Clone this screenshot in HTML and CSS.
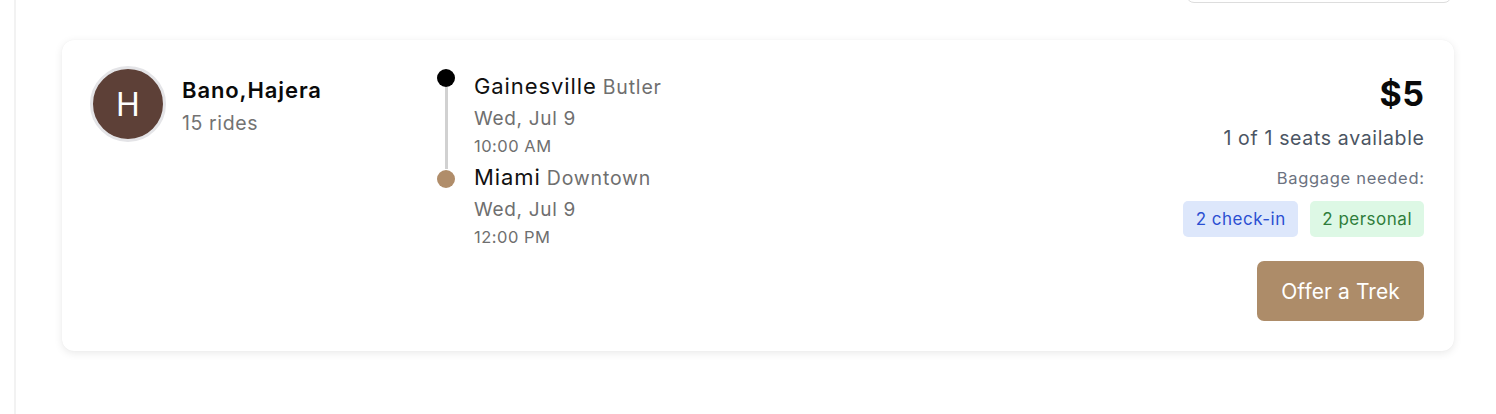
FILE: index.html
```html
<!DOCTYPE html>
<html lang="en">
<head>
<meta charset="utf-8">
<title>Ride request</title>
<link rel="stylesheet" href="styles.css">
</head>
<body>
<div class="layout">
  <aside class="rail"></aside>
  <main class="main">
    <div class="toolbar">
      <div class="select-box"></div>
    </div>
    <section class="card">
      <div class="rider">
        <div class="avatar">H</div>
        <div class="rider-info">
          <div class="rider-name">Bano,Hajera</div>
          <div class="rider-rides">15 rides</div>
        </div>
      </div>
      <div class="route">
        <div class="stop stop-first">
          <div class="marker">
            <span class="dot dot-start"></span>
            <span class="line"></span>
          </div>
          <div class="stop-info">
            <div class="place"><span class="city">Gainesville</span> <span class="area">Butler</span></div>
            <div class="date">Wed, Jul 9</div>
            <div class="time">10:00 AM</div>
          </div>
        </div>
        <div class="stop stop-last">
          <div class="marker">
            <span class="dot dot-end"></span>
          </div>
          <div class="stop-info">
            <div class="place"><span class="city">Miami</span> <span class="area">Downtown</span></div>
            <div class="date">Wed, Jul 9</div>
            <div class="time">12:00 PM</div>
          </div>
        </div>
      </div>
      <div class="offer">
        <div class="price">$5</div>
        <div class="seats">1 of 1 seats available</div>
        <div class="baggage-label">Baggage needed:</div>
        <div class="badges">
          <span class="badge badge-blue">2 check-in</span>
          <span class="badge badge-green">2 personal</span>
        </div>
        <button class="btn-offer">Offer a Trek</button>
      </div>
    </section>
  </main>
</div>
</body>
</html>
```

FILE: styles.css
```css
* { box-sizing: border-box; }
html, body { margin: 0; padding: 0; background: #ffffff; }
body {
  font-family: Inter, "Noto Sans", "Liberation Sans", sans-serif;
  color: #111111;
  height: 414px;
  overflow: hidden;
}
.layout { display: flex; min-height: 414px; }
.rail {
  width: 16px;
  flex: 0 0 16px;
  border-right: 2px solid #f2f2f2;
}
.main {
  flex: 1;
  padding: 0 42px 0 46px;
}
.toolbar {
  display: flex;
  justify-content: flex-end;
  margin-top: -37px;
  padding-right: 2px;
}
.select-box {
  width: 266px;
  height: 40px;
  border: 1px solid #dddddd;
  border-radius: 8px;
  background: #fff;
}
.card {
  margin-top: 37px;
  display: flex;
  align-items: flex-start;
  background: #fff;
  border-radius: 12px;
  box-shadow: 0 2px 8px rgba(0, 0, 0, 0.09), 0 0 1px rgba(0, 0, 0, 0.06);
  padding: 26px 30px 30px 28px;
  height: 311px;
}
.rider {
  display: flex;
  align-items: flex-start;
  gap: 16px;
  width: 347px;
  flex: 0 0 347px;
}
.avatar {
  width: 76px;
  height: 76px;
  border-radius: 50%;
  background: #5d4037;
  border: 3px solid #e4e4e7;
  color: #fff;
  font-size: 32px;
  display: flex;
  align-items: center;
  justify-content: center;
  font-weight: 400;
}
.rider-info { padding-top: 10px; }
.rider-name {
  font-size: 22px;
  font-weight: 600;
  line-height: 28px;
  letter-spacing: 0.9px;
  color: #0a0a0a;
}
.rider-rides {
  font-size: 19.5px;
  line-height: 28px;
  letter-spacing: 0.6px;
  color: #737373;
  margin-top: 5px;
}
.route {
  display: flex;
  flex-direction: column;
}
.stop { display: flex; gap: 19px; }
.marker {
  width: 18px;
  display: flex;
  flex-direction: column;
  align-items: center;
  padding-top: 3px;
}
.dot {
  width: 18px;
  height: 18px;
  border-radius: 50%;
  flex: 0 0 18px;
}
.dot-start { background: #000; }
.dot-end { background: #b08d6a; margin-top: 5px; }
.line {
  width: 3px;
  flex: 1;
  background: #d1d1d1;
  margin-bottom: -7px;
}
.stop-first .stop-info { padding-top: 5px; padding-bottom: 4px; }
.place { font-size: 22px; line-height: 30px; white-space: nowrap; }
.city { color: #111; letter-spacing: 0.9px; }
.area { color: #6f6f6f; font-size: 19.5px; letter-spacing: 0.8px; }
.date {
  font-size: 19px;
  line-height: 30px;
  letter-spacing: 0.7px;
  color: #6f6f6f;
  margin-top: 2px;
}
.time {
  font-size: 16.5px;
  line-height: 24px;
  letter-spacing: 0.5px;
  color: #6f6f6f;
}
.offer {
  margin-left: auto;
  display: flex;
  flex-direction: column;
  align-items: flex-end;
  text-align: right;
}
.price {
  font-size: 34px;
  font-weight: 700;
  line-height: 40px;
  letter-spacing: 0.5px;
  color: #0a0a0a;
  margin-top: 8px;
  margin-right: -0.5px;
}
.seats {
  font-size: 19.5px;
  line-height: 28px;
  letter-spacing: 0.65px;
  color: #4b5563;
  margin-top: 10px;
  margin-right: -0.6px;
}
.baggage-label {
  font-size: 16.5px;
  line-height: 22px;
  letter-spacing: 0.7px;
  color: #6b7280;
  margin-top: 15px;
  margin-right: -0.7px;
}
.badges {
  display: flex;
  gap: 12px;
  margin-top: 12px;
}
.badge {
  font-size: 17px;
  line-height: 36px;
  height: 36px;
  padding: 0 12px 0 12.5px;
  letter-spacing: 0.5px;
  border-radius: 5px;
}
.badge-blue { background: #dde7fb; color: #2b4fd2; }
.badge-green { background: #ddf8e5; color: #2f7d3b; }
.btn-offer {
  margin-top: 24px;
  height: 60px;
  padding: 0 24px;
  background: #ad8c69;
  color: #fff;
  border: none;
  border-radius: 7px;
  font-family: inherit;
  font-size: 21px;
  letter-spacing: 0.1px;
}
```
